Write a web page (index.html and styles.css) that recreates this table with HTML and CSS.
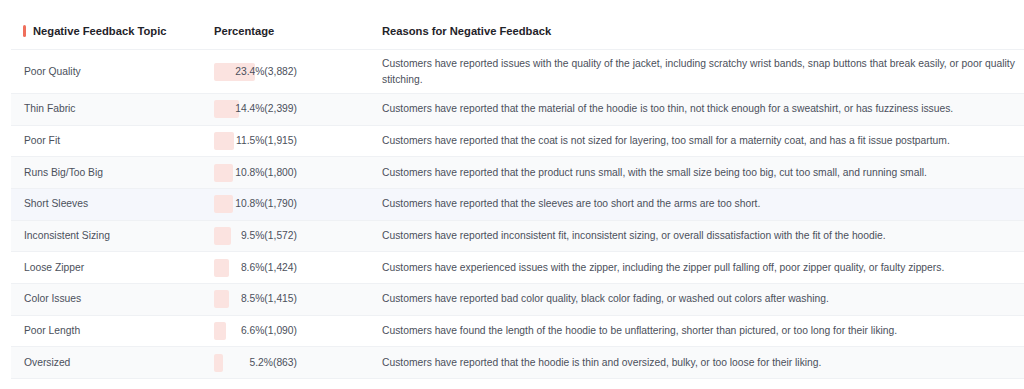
FILE: index.html
```html
<!DOCTYPE html>
<html>
<head>
<meta charset="utf-8">
<link rel="stylesheet" href="styles.css">
</head>
<body>
<div class="table">
  <div class="row head">
    <div class="topic"><span class="mark"></span>Negative Feedback Topic</div>
    <div>Percentage</div>
    <div>Reasons for Negative Feedback</div>
  </div>
  <div class="row">
    <div>Poor Quality</div>
    <div class="pct"><span class="bar" style="width:41px"></span><span class="val">23.4%(3,882)</span></div>
    <div>Customers have reported issues with the quality of the jacket, including scratchy wrist bands, snap buttons that break easily, or poor quality stitching.</div>
  </div>
  <div class="row alt">
    <div>Thin Fabric</div>
    <div class="pct"><span class="bar" style="width:25px"></span><span class="val">14.4%(2,399)</span></div>
    <div>Customers have reported that the material of the hoodie is too thin, not thick enough for a sweatshirt, or has fuzziness issues.</div>
  </div>
  <div class="row">
    <div>Poor Fit</div>
    <div class="pct"><span class="bar" style="width:20px"></span><span class="val">11.5%(1,915)</span></div>
    <div>Customers have reported that the coat is not sized for layering, too small for a maternity coat, and has a fit issue postpartum.</div>
  </div>
  <div class="row alt">
    <div>Runs Big/Too Big</div>
    <div class="pct"><span class="bar" style="width:19px"></span><span class="val">10.8%(1,800)</span></div>
    <div>Customers have reported that the product runs small, with the small size being too big, cut too small, and running small.</div>
  </div>
  <div class="row hover">
    <div>Short Sleeves</div>
    <div class="pct"><span class="bar" style="width:19px"></span><span class="val">10.8%(1,790)</span></div>
    <div>Customers have reported that the sleeves are too short and the arms are too short.</div>
  </div>
  <div class="row alt">
    <div>Inconsistent Sizing</div>
    <div class="pct"><span class="bar" style="width:17px"></span><span class="val">9.5%(1,572)</span></div>
    <div>Customers have reported inconsistent fit, inconsistent sizing, or overall dissatisfaction with the fit of the hoodie.</div>
  </div>
  <div class="row">
    <div>Loose Zipper</div>
    <div class="pct"><span class="bar" style="width:15px"></span><span class="val">8.6%(1,424)</span></div>
    <div>Customers have experienced issues with the zipper, including the zipper pull falling off, poor zipper quality, or faulty zippers.</div>
  </div>
  <div class="row alt">
    <div>Color Issues</div>
    <div class="pct"><span class="bar" style="width:15px"></span><span class="val">8.5%(1,415)</span></div>
    <div>Customers have reported bad color quality, black color fading, or washed out colors after washing.</div>
  </div>
  <div class="row">
    <div>Poor Length</div>
    <div class="pct"><span class="bar" style="width:12px"></span><span class="val">6.6%(1,090)</span></div>
    <div>Customers have found the length of the hoodie to be unflattering, shorter than pictured, or too long for their liking.</div>
  </div>
  <div class="row alt">
    <div>Oversized</div>
    <div class="pct"><span class="bar" style="width:9px"></span><span class="val">5.2%(863)</span></div>
    <div>Customers have reported that the hoodie is thin and oversized, bulky, or too loose for their liking.</div>
  </div>
</div>
</body>
</html>
```

FILE: styles.css
```css
html, body {
  margin: 0;
  padding: 0;
  background: #ffffff;
}

body {
  font-family: "Liberation Sans", Arial, sans-serif;
  font-size: 10.3px;
  color: #4b505b;
}

.table {
  margin-left: 11px;
}

.row {
  display: grid;
  grid-template-columns: 190px 168px 1fr;
  align-items: center;
  padding: 5.5px 0 5.5px 13px;
  line-height: 16px;
  border-bottom: 1px solid #eff1f4;
  background: #ffffff;
}

.row.alt {
  background: #f9fafb;
}

.row.hover {
  background: #f5f7fc;
}

.row.head {
  padding-top: 23px;
  padding-bottom: 10px;
  font-size: 11.2px;
  font-weight: bold;
  color: #1f2329;
}

.topic {
  display: flex;
  align-items: center;
  gap: 7px;
  margin-left: -1px;
}

.mark {
  width: 3px;
  height: 12px;
  border-radius: 1.5px;
  background: #ef6f5c;
}

.pct {
  display: grid;
  width: 83px;
  height: 19.67px;
  align-items: center;
}

.bar, .val {
  grid-area: 1 / 1;
}

.bar {
  justify-self: start;
  height: 18px;
  border-radius: 2px;
  background: #fbe3e0;
}

.val {
  justify-self: end;
}
```
